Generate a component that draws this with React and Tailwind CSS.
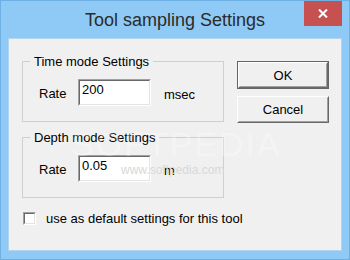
import React from "react";

const font = { fontFamily: '"Liberation Sans", Arial, sans-serif' };

function Sunken({ value }) {
  return (
    <div className="w-[73px] h-[27px] border border-t-[#a0a0a0] border-l-[#a0a0a0] border-r-white border-b-white">
      <div className="w-full h-full border border-t-[#696969] border-l-[#696969] border-r-[#e3e3e3] border-b-[#e3e3e3] bg-white flex items-start pl-[2px] pt-[1px] text-[13px] leading-[15px] text-black">
        {value}
      </div>
    </div>
  );
}

function Group({ title, value, unit }) {
  return (
    <div className="w-[202px] flex flex-col">
      <div className="flex items-center h-[15px]">
        <div className="w-[8px] h-[8px] self-end border-t border-l border-[#cfcfcf]" />
        <span className="px-[4px] text-[13px] leading-[15px] text-black whitespace-nowrap">{title}</span>
        <div className="flex-1 h-[8px] self-end border-t border-r border-[#cfcfcf]" />
      </div>
      <div className="border-l border-r border-b border-[#cfcfcf] pl-[16px] pt-[10px] pb-[15px]">
        <div className="flex items-center">
          <span className="w-[39px] text-[13px] leading-[15px] text-black pt-[1px]">Rate</span>
          <Sunken value={value} />
          <span className="ml-[13px] text-[13px] leading-[15px] text-black pt-[4px]">{unit}</span>
        </div>
      </div>
    </div>
  );
}

export default function App() {
  return (
    <div style={font} className="w-[350px] h-[260px] bg-[#8ecaf5] border border-[#6eb0e4] flex flex-col">
      <div className="h-[37px] grid grid-cols-[1fr_auto_1fr] items-start">
        <div />
        <div className="pt-[9px] text-[18px] leading-[20px] text-[#2b2b2b] whitespace-nowrap">Tool sampling Settings</div>
        <div className="flex justify-end pr-[7px]">
          <div className="w-[38px] h-[25px] bg-[#c75050] flex items-center justify-center">
            <svg width="10" height="9" viewBox="0 0 10 9">
              <path d="M1 0.5 L9 8.5 M9 0.5 L1 8.5" stroke="white" strokeWidth="2" />
            </svg>
          </div>
        </div>
      </div>
      <div className="mx-[7px] h-[213px] bg-[#f0f0f0] border border-[#b4d4ee] flex relative overflow-hidden">
        <div className="flex flex-col pl-[13px] pt-[15px] w-[228px] shrink-0">
          <Group title="Time mode Settings" value="200" unit="msec" />
          <div className="h-[8px]" />
          <Group title="Depth mode Settings" value="0.05" unit="m" />
          <div className="flex items-center mt-[13px] ml-[1px]">
            <div className="w-[13px] h-[13px] shrink-0 border border-t-[#a0a0a0] border-l-[#a0a0a0] border-r-white border-b-white">
              <div className="w-full h-full bg-white border border-t-[#696969] border-l-[#696969] border-r-[#e3e3e3] border-b-[#e3e3e3]" />
            </div>
            <span className="ml-[10px] text-[13px] leading-[15px] text-black whitespace-nowrap">use as default settings for this tool</span>
          </div>
        </div>
        <div className="flex flex-col pt-[22px] gap-[7px]">
          <div className="w-[92px] h-[28px] border border-[#646464]">
            <div className="w-full h-full border border-t-white border-l-white border-r-[#696969] border-b-[#696969] bg-[#f0f0f0]">
              <div className="w-full h-full border border-t-[#f0f0f0] border-l-[#f0f0f0] border-r-[#a0a0a0] border-b-[#a0a0a0] flex items-center justify-center text-[13px] leading-[15px] text-black">OK</div>
            </div>
          </div>
          <div className="w-[92px] h-[27px] border border-t-white border-l-white border-r-[#696969] border-b-[#696969] bg-[#f0f0f0]">
            <div className="w-full h-full border border-t-[#f0f0f0] border-l-[#f0f0f0] border-r-[#a0a0a0] border-b-[#a0a0a0] flex items-center justify-center text-[13px] leading-[15px] text-black">Cancel</div>
          </div>
        </div>
        <div className="absolute left-[62px] top-[88px] text-[34px] leading-[34px] tracking-[2px] text-white/30 pointer-events-none select-none">SOFTPEDIA</div>
        <div className="absolute left-[112px] top-[124px] text-[12px] leading-[14px] text-[#d8d8d8] pointer-events-none select-none">www.softpedia.com</div>
      </div>
    </div>
  );
}
